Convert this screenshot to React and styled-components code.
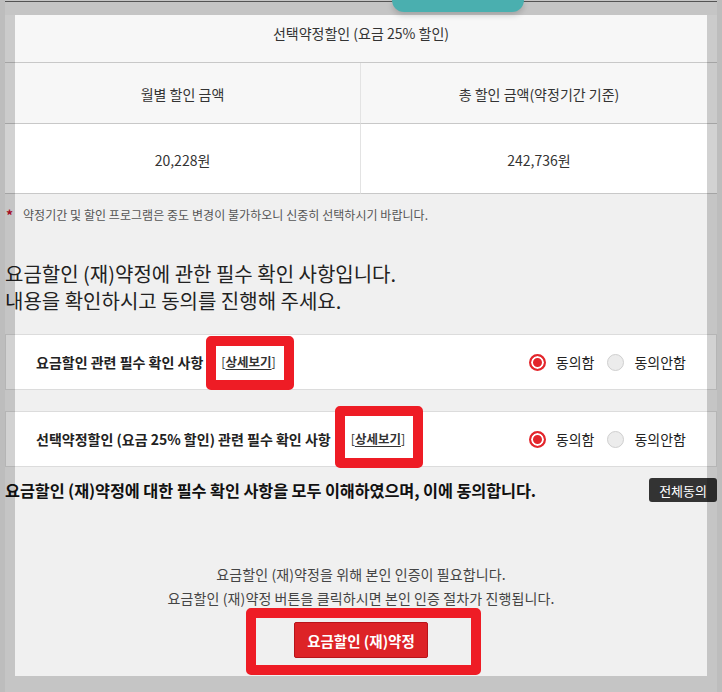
import React from "react";
import styled, { createGlobalStyle } from "styled-components";

const GlobalStyle = createGlobalStyle`
  html, body { margin: 0; padding: 0; }
  body {
    background: #e6e6e6;
    font-family: "Noto Sans CJK KR", "Noto Sans", sans-serif;
    color: #222;
    overflow: hidden;
  }
  * { box-sizing: border-box; }
`;

const Page = styled.div`
  position: relative;
  margin: 0 5px;
  min-height: 692px;
  padding-top: 1px;
  background: #f0f0f0;
`;

const TopBar = styled.div`
  position: relative;
  height: 14px;
  border-top: 1px solid #676767;
`;

const Tab = styled.div`
  position: absolute;
  left: 387px;
  top: -2px;
  width: 132px;
  height: 12px;
  background: #5ad5d5;
  border-radius: 0 0 12px 12px;
  box-shadow: 0 3px 6px rgba(0, 0, 0, 0.18);
`;

const Table = styled.div`
  display: grid;
  grid-template-columns: 1fr 1fr;
  font-size: 14px;
  color: #333;
`;

const TitleCell = styled.div`
  grid-column: 1 / span 2;
  height: 48px;
  padding-top: 8px;
  line-height: 20px;
  text-align: center;
  background: #f7f7f7;
  border-bottom: 1px solid #c8c8c8;
`;

const Cell = styled.div`
  display: flex;
  align-items: center;
  justify-content: center;
  height: ${(p) => p.$h}px;
  padding-top: 2px;
  background: ${(p) => (p.$head ? "#f7f7f7" : "#ffffff")};
  border-bottom: 1px solid #c8c8c8;
  border-right: ${(p) => (p.$divider ? "1px solid #e3e3e3" : "none")};
`;

const Note = styled.p`
  margin: 12px 0 0;
  padding-left: 1px;
  display: flex;
  align-items: center;
  font-size: 12px;
  line-height: 18px;
  color: #555;
  letter-spacing: 0.05px;
`;

const Star = styled.span`
  color: #c8102e;
  font-size: 14px;
  font-weight: 700;
  width: 17px;
`;

const Heading = styled.h2`
  margin: 36px 0 0;
  font-size: 20px;
  font-weight: 400;
  line-height: 27px;
  color: #222;
`;

const AgreeList = styled.div`
  display: flex;
  flex-direction: column;
  gap: 21px;
  margin-top: 20px;
`;

const AgreeRow = styled.div`
  display: flex;
  align-items: center;
  height: 56px;
  padding: 0 30px;
  background: #fff;
  border: 1px solid #dcdcdc;
`;

const Label = styled.span`
  font-size: 14px;
  font-weight: 700;
  color: #222;
`;

const DetailLink = styled.a`
  position: relative;
  margin-left: ${(p) => p.$gap}px;
  font-size: 12.5px;
  line-height: 20px;
  color: #333;
  text-decoration: none;

  b {
    font-weight: 700;
    text-decoration: underline;
    text-underline-offset: 2px;
  }
`;

const Frame = styled.span`
  position: absolute;
  top: ${(p) => p.$t}px;
  bottom: ${(p) => p.$b}px;
  left: ${(p) => p.$l}px;
  right: ${(p) => p.$r}px;
  border: 10px solid #ee1c25;
  border-radius: 5px;
  pointer-events: none;
  z-index: 20;
`;

const RadioGroup = styled.div`
  display: flex;
  align-items: center;
  gap: 13px;
  margin-left: auto;
`;

const Option = styled.label`
  display: flex;
  align-items: center;
  gap: 10px;
  font-size: 14px;
  color: #222;
`;

const RadioMark = styled.span`
  width: 17px;
  height: 17px;
  border-radius: 50%;
  border: ${(p) => (p.$on ? "2px solid #e3262c" : "1px solid #cfcfcf")};
  background: ${(p) => (p.$on ? "#e3262c" : "#ececec")};
  box-shadow: ${(p) => (p.$on ? "inset 0 0 0 2px #fff" : "none")};
`;

const AllRow = styled.div`
  display: flex;
  align-items: center;
  justify-content: space-between;
  margin-top: 11px;
  height: 24px;
`;

const AllText = styled.p`
  margin: 0;
  font-size: 16.3px;
  font-weight: 700;
  color: #111;
  letter-spacing: -0.1px;
`;

const AllButton = styled.button`
  height: 24px;
  padding: 0 10px;
  border: none;
  border-radius: 3px;
  background: #333;
  color: #fff;
  font-family: inherit;
  font-size: 13px;
`;

const Auth = styled.div`
  display: flex;
  flex-direction: column;
  align-items: center;
  margin-top: 60px;
`;

const AuthText = styled.p`
  margin: 0;
  font-size: 14px;
  line-height: 24px;
  color: #444;
  text-align: center;
  letter-spacing: 0.1px;
`;

const ButtonWrap = styled.div`
  position: relative;
  margin-top: 12px;
`;

const SubmitButton = styled.button`
  display: block;
  width: 134px;
  height: 36px;
  border: 1px solid #b8141a;
  border-radius: 2px;
  background: #dd2327;
  color: #fff;
  font-family: inherit;
  font-size: 14.5px;
  font-weight: 700;
`;

const Spotlight = styled.div`
  position: absolute;
  left: 10px;
  top: 15px;
  width: 692px;
  height: 661px;
  box-shadow: 0 0 0 1400px rgba(0, 0, 0, 0.175);
  pointer-events: none;
  z-index: 10;
`;

function Radios() {
  return (
    <RadioGroup>
      <Option>
        <RadioMark $on />
        동의함
      </Option>
      <Option>
        <RadioMark />
        동의안함
      </Option>
    </RadioGroup>
  );
}

const rows = [
  { label: "요금할인 관련 필수 확인 사항", gap: 18, frame: { t: -16, b: -18, l: -15, r: -18 } },
  {
    label: "선택약정할인 (요금 25% 할인) 관련 필수 확인 사항",
    gap: 20,
    frame: { t: -23, b: -19, l: -16, r: -18 },
  },
];

export default function App() {
  return (
    <>
      <GlobalStyle />
      <Page>
        <TopBar>
          <Tab />
        </TopBar>
        <Table>
          <TitleCell>선택약정할인 (요금 25% 할인)</TitleCell>
          <Cell $head $divider $h={61}>월별 할인 금액</Cell>
          <Cell $head $h={61}>총 할인 금액(약정기간 기준)</Cell>
          <Cell $divider $h={70}>20,228원</Cell>
          <Cell $h={70}>242,736원</Cell>
        </Table>
        <Note>
          <Star>*</Star>
          약정기간 및 할인 프로그램은 중도 변경이 불가하오니 신중히 선택하시기 바랍니다.
        </Note>
        <Heading>
          요금할인 (재)약정에 관한 필수 확인 사항입니다.
          <br />
          내용을 확인하시고 동의를 진행해 주세요.
        </Heading>
        <AgreeList>
          {rows.map((r) => (
            <AgreeRow key={r.label}>
              <Label>{r.label}</Label>
              <DetailLink href="#" $gap={r.gap}>
                [<b>상세보기</b>]
                <Frame $t={r.frame.t} $b={r.frame.b} $l={r.frame.l} $r={r.frame.r} />
              </DetailLink>
              <Radios />
            </AgreeRow>
          ))}
        </AgreeList>
        <AllRow>
          <AllText>요금할인 (재)약정에 대한 필수 확인 사항을 모두 이해하였으며, 이에 동의합니다.</AllText>
          <AllButton>전체동의</AllButton>
        </AllRow>
        <Auth>
          <AuthText>
            요금할인 (재)약정을 위해 본인 인증이 필요합니다.
            <br />
            요금할인 (재)약정 버튼을 클릭하시면 본인 인증 절차가 진행됩니다.
          </AuthText>
          <ButtonWrap>
            <SubmitButton>요금할인 (재)약정</SubmitButton>
            <Frame $t={-14} $b={-17} $l={-48} $r={-53} />
          </ButtonWrap>
        </Auth>
        <Spotlight />
      </Page>
    </>
  );
}
